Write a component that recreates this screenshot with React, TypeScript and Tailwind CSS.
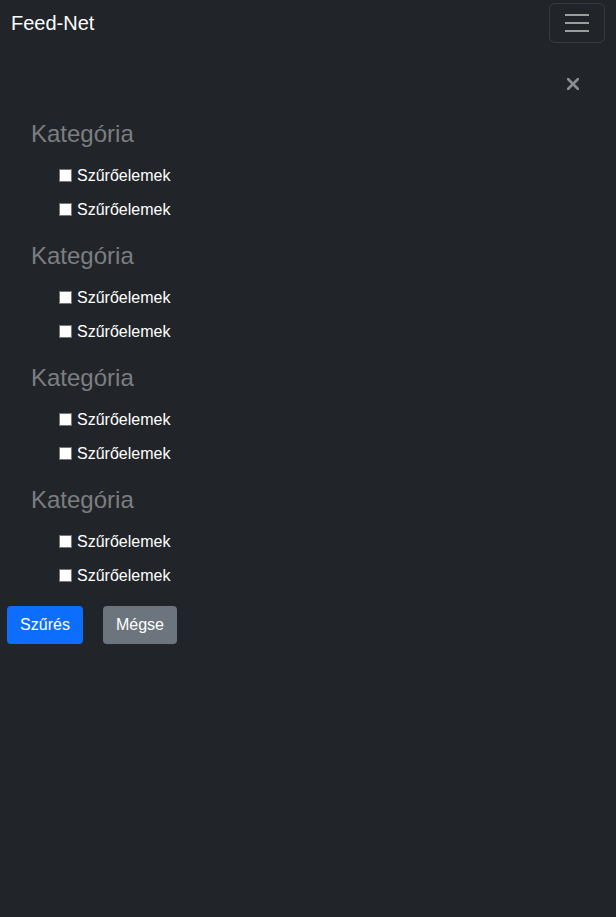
import React from "react";

const groups = [0, 1, 2, 3];

function FilterRow() {
  return (
    <label className="flex h-[24px] items-center gap-[5px] pl-[59px] text-[16px] text-white">
      <input
        type="checkbox"
        className="m-0 -mt-[2px] h-[13px] w-[13px] appearance-none border border-[#767676] bg-white checked:bg-[#0d6efd]"
      />
      <span>Szűrőelemek</span>
    </label>
  );
}

export default function App() {
  return (
    <div
      className="min-h-[917px] bg-[#212529] text-white"
      style={{ fontFamily: '"Liberation Sans", Arial, sans-serif' }}
    >
      <nav className="flex h-[46px] items-center justify-between px-[11px]">
        <span className="text-[20px] leading-none text-white">Feed-Net</span>
        <button className="flex h-[40px] w-[56px] items-center justify-center rounded-[6px] border border-white/10">
          <svg width="24" height="18" viewBox="0 0 24 18">
            <path d="M0 1h24M0 9h24M0 17h24" stroke="rgba(255,255,255,0.55)" strokeWidth="2" />
          </svg>
        </button>
      </nav>

      <div className="mt-[32px] flex justify-end pr-[37px]">
        <button className="flex h-[12px] w-[12px] items-center justify-center">
          <svg width="12" height="12" viewBox="0 0 12 12">
            <path d="M1 1l10 10M11 1L1 11" stroke="#8a8d91" strokeWidth="2.6" strokeLinecap="round" />
          </svg>
        </button>
      </div>

      <div className="mt-[29px] flex flex-col gap-[19px]">
        {groups.map((g) => (
          <div key={g} className="flex flex-col">
            <h4 className="h-[29px] pl-[31px] text-[24px] leading-[29px] text-[#7c7e80]">Kategória</h4>
            <div className="mt-[16px] flex flex-col gap-[10px]">
              <FilterRow />
              <FilterRow />
            </div>
          </div>
        ))}
      </div>

      <div className="mt-[18px] flex gap-[20px] pl-[7px]">
        <button className="h-[38px] w-[76px] rounded-[4px] bg-[#0d6efd] text-[16px] text-white">Szűrés</button>
        <button className="h-[38px] w-[74px] rounded-[4px] bg-[#6c757d] text-[16px] text-white">Mégse</button>
      </div>
    </div>
  );
}
